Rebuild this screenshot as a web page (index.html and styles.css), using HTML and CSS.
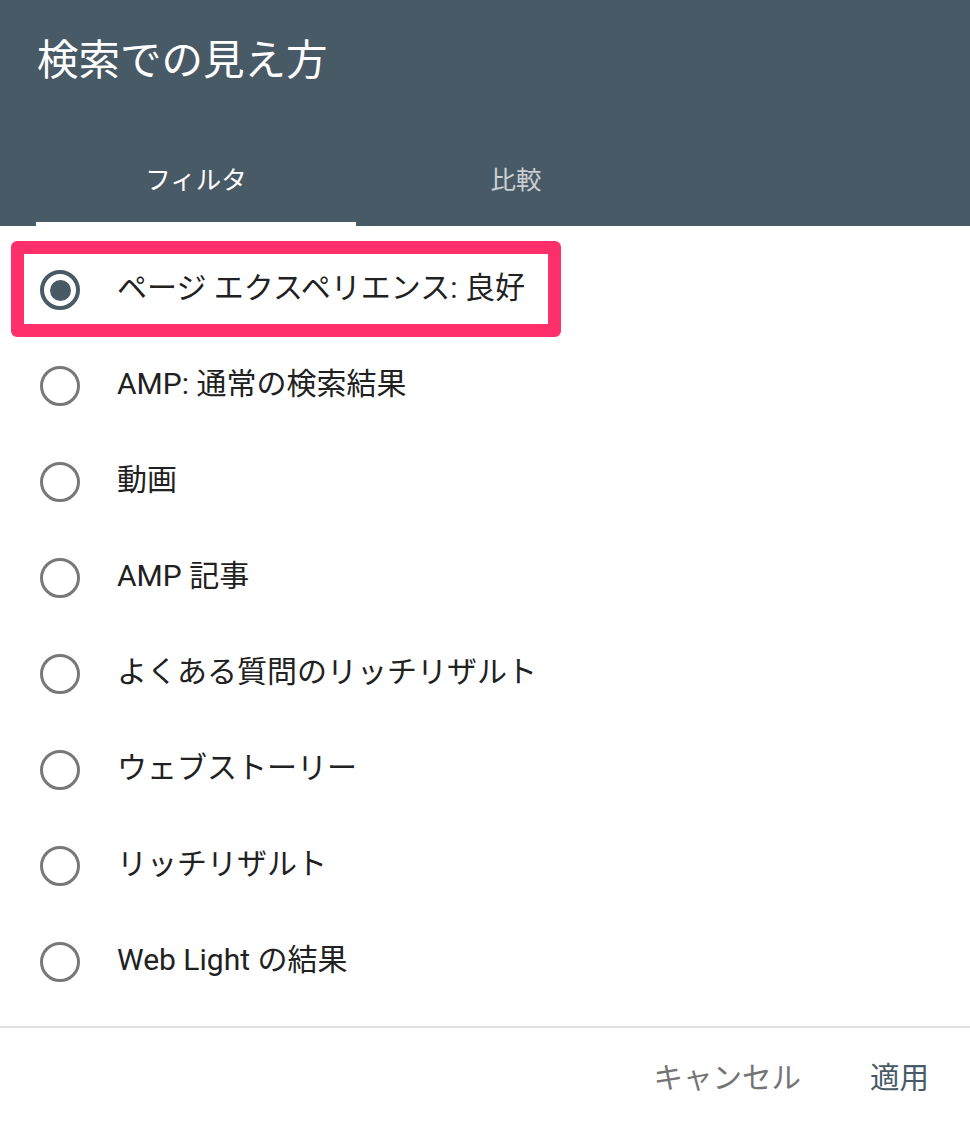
FILE: index.html
```html
<!DOCTYPE html>
<html lang="ja">
<head>
<meta charset="utf-8">
<link rel="stylesheet" href="styles.css">
</head>
<body>
<div class="dialog">
  <header class="header">
    <h1 class="title">検索での見え方</h1>
    <nav class="tabs">
      <div class="tab active">フィルタ</div>
      <div class="tab">比較</div>
    </nav>
  </header>
  <ul class="list">
    <li class="row selected"><span class="radio"></span><span class="label">ページ エクスペリエンス: 良好</span><span class="highlight"></span></li>
    <li class="row"><span class="radio"></span><span class="label">AMP: 通常の検索結果</span></li>
    <li class="row"><span class="radio"></span><span class="label">動画</span></li>
    <li class="row"><span class="radio"></span><span class="label">AMP 記事</span></li>
    <li class="row"><span class="radio"></span><span class="label">よくある質問のリッチリザルト</span></li>
    <li class="row"><span class="radio"></span><span class="label">ウェブストーリー</span></li>
    <li class="row"><span class="radio"></span><span class="label">リッチリザルト</span></li>
    <li class="row"><span class="radio"></span><span class="label">Web Light の結果</span></li>
  </ul>
  <footer class="footer">
    <button class="btn cancel">キャンセル</button>
    <button class="btn apply">適用</button>
  </footer>
</div>
</body>
</html>
```

FILE: styles.css
```css
* { box-sizing: border-box; }
html, body {
  margin: 0;
  padding: 0;
  background: #ffffff;
  font-family: Roboto, "Noto Sans CJK JP", sans-serif;
  overflow: hidden;
}
.dialog {
  width: 970px;
}
.header {
  background: #485a66;
  height: 226px;
  display: flex;
  flex-direction: column;
}
.title {
  margin: 0;
  height: 130px;
  padding: 35px 0 0 37px;
  font-size: 41.5px;
  line-height: 52px;
  font-weight: 400;
  color: #ffffff;
}
.tabs {
  display: flex;
  height: 96px;
  padding-left: 36px;
}
.tab {
  width: 320px;
  display: flex;
  align-items: center;
  justify-content: center;
  font-size: 25.5px;
  color: rgba(255, 255, 255, 0.72);
  border-bottom: 4px solid transparent;
  padding-top: 2px;
}
.tab.active {
  color: #ffffff;
  border-bottom-color: #ffffff;
}
.list {
  list-style: none;
  margin: 0;
  padding: 16px 0 16px 0;
  border-bottom: 2px solid #e0e0e0;
}
.row {
  position: relative;
  height: 96px;
  display: flex;
  align-items: center;
  padding-left: 40px;
  gap: 37px;
}
.radio {
  width: 40px;
  height: 40px;
  border-radius: 50%;
  border: 3.5px solid #787878;
  flex: none;
  display: flex;
  align-items: center;
  justify-content: center;
}
.selected .radio {
  border: 4px solid #485a66;
}
.selected .radio::after {
  content: "";
  width: 21px;
  height: 21px;
  border-radius: 50%;
  background: #485a66;
}
.label {
  font-size: 30px;
  line-height: 40px;
  color: #212121;
  white-space: nowrap;
  margin-top: -4px;
}
.highlight {
  position: absolute;
  left: 11px;
  top: -1px;
  width: 550px;
  height: 96px;
  border: 13px solid #ff2f6b;
  border-radius: 6px;
  pointer-events: none;
}
.footer {
  height: 100px;
  display: flex;
  justify-content: flex-end;
  align-items: center;
  gap: 69px;
  padding-right: 41px;
}
.btn {
  background: none;
  border: none;
  padding: 0;
  font-family: Roboto, "Noto Sans CJK JP", sans-serif;
  font-size: 29.5px;
  line-height: 40px;
}
.cancel { color: #757575; }
.apply { color: #485a66; }
```
